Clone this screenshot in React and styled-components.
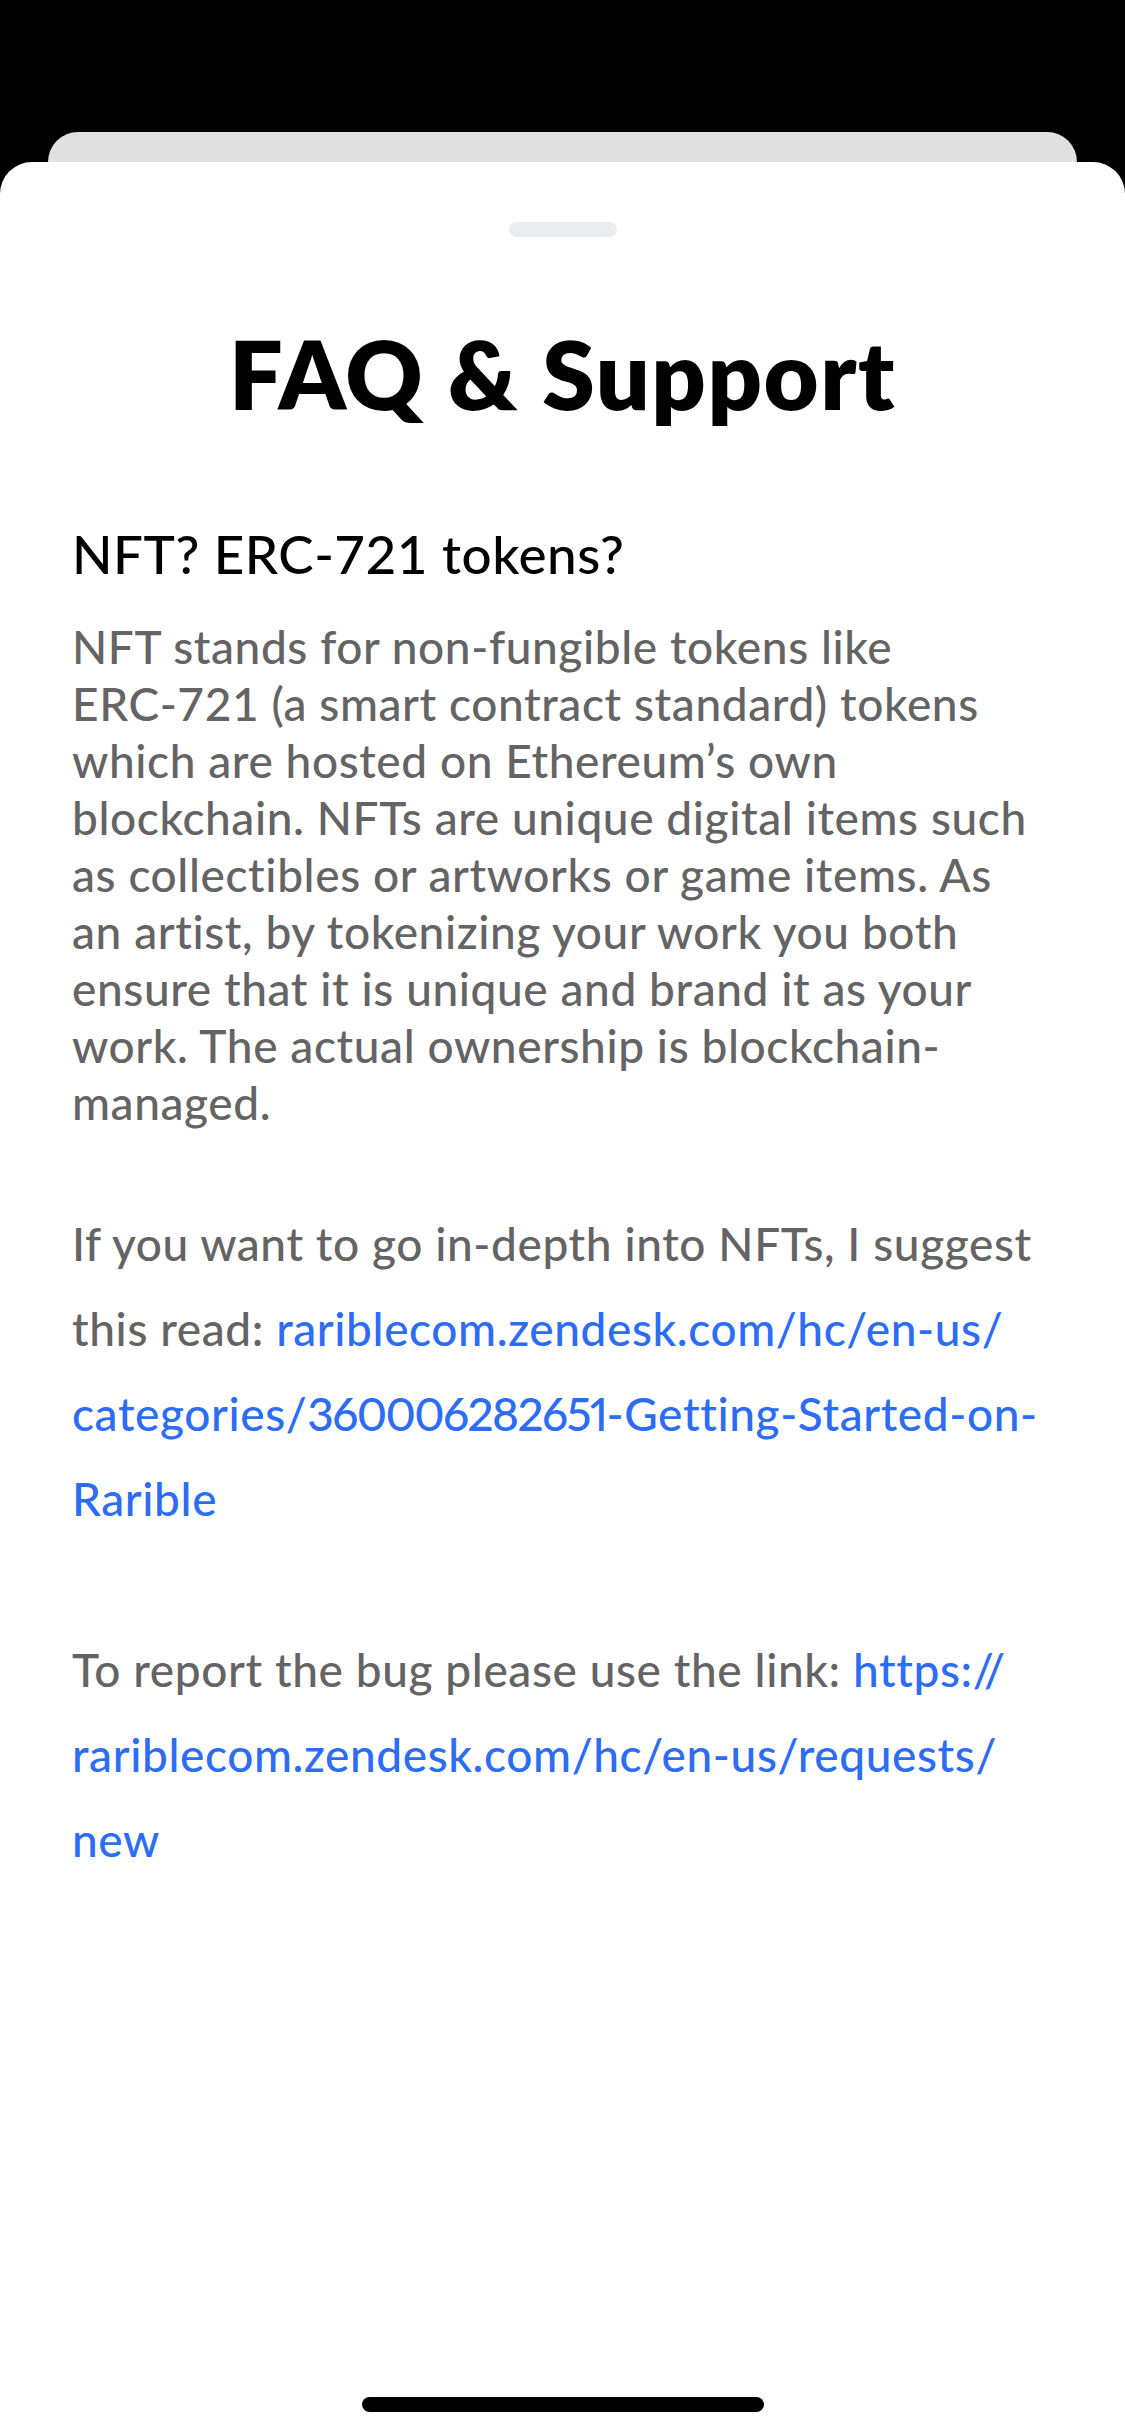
import React from "react";
import styled, { createGlobalStyle } from "styled-components";

const Global = createGlobalStyle`
  html, body { margin: 0; padding: 0; background: #000; }
  #root { min-height: 2436px; }
`;

const Screen = styled.div`
  width: 1125px;
  height: 2436px;
  background: #000;
  display: flex;
  flex-direction: column;
  overflow: hidden;
  font-family: Lato, "Noto Sans", sans-serif;
`;

const BackCard = styled.div`
  margin: 132px 48px 0;
  height: 30px;
  background: #e0e0e0;
  border-radius: 30px 30px 0 0;
  flex: none;
`;

const Sheet = styled.div`
  flex: 1;
  background: #fff;
  border-radius: 32px 32px 0 0;
  display: flex;
  flex-direction: column;
  align-items: stretch;
  padding-bottom: 24px;
`;

const Grabber = styled.div`
  align-self: center;
  margin-top: 60px;
  width: 108px;
  height: 15px;
  border-radius: 8px;
  background: #ebecee;
`;

const Title = styled.h1`
  margin: 79px 0 0;
  font-size: 95px;
  line-height: 114px;
  font-weight: 800;
  color: #000;
  text-align: center;
  letter-spacing: 1.5px;
`;

const Content = styled.div`
  padding: 0 72px;
  display: flex;
  flex-direction: column;
`;

const Question = styled.h2`
  margin: 92px 0 0;
  font-size: 53px;
  line-height: 64px;
  font-weight: 500;
  color: #000;
  white-space: nowrap;
  letter-spacing: 0.5px;
`;

const Paragraph = styled.p`
  margin: ${(p) => p.$gap}px 0 0;
  font-size: 46px;
  line-height: ${(p) => p.$lh}px;
  font-weight: 500;
  color: #646464;
  white-space: nowrap;
  letter-spacing: 0.6px;
`;

const Link = styled.a`
  color: #2d6cf5;
  text-decoration: none;
  font-variant-numeric: proportional-nums;
`;

const Digits = styled.span`
  letter-spacing: -1.6px;
`;

const HomeBar = styled.div`
  margin-top: auto;
  align-self: center;
  width: 402px;
  height: 15px;
  border-radius: 8px;
  background: #000;
`;

export default function App() {
  return (
    <>
      <Global />
      <Screen>
        <BackCard />
        <Sheet>
          <Grabber />
          <Title>FAQ &amp; Support</Title>
          <Content>
            <Question>NFT? ERC-721 tokens?</Question>
            <Paragraph $gap={32} $lh={57}>
              NFT stands for non-fungible tokens like
              <br />
              ERC-721 (a smart contract standard) tokens
              <br />
              which are hosted on Ethereum’s own
              <br />
              blockchain. NFTs are unique digital items such
              <br />
              as collectibles or artworks or game items. As
              <br />
              an artist, by tokenizing your work you both
              <br />
              ensure that it is unique and brand it as your
              <br />
              work. The actual ownership is blockchain-
              <br />
              managed.
            </Paragraph>
            <Paragraph $gap={70} $lh={85}>
              If you want to go in-depth into NFTs, I suggest
              <br />
              this read:{" "}
              <Link href="#">
                rariblecom.zendesk.com/hc/en-us/
                <br />
                categories/<Digits>360006282651</Digits>-Getting-Started-on-
                <br />
                Rarible
              </Link>
            </Paragraph>
            <Paragraph $gap={86} $lh={85}>
              To report the bug please use the link:{" "}
              <Link href="#">
                https://
                <br />
                rariblecom.zendesk.com/hc/en-us/requests/
                <br />
                new
              </Link>
            </Paragraph>
          </Content>
          <HomeBar />
        </Sheet>
      </Screen>
    </>
  );
}
